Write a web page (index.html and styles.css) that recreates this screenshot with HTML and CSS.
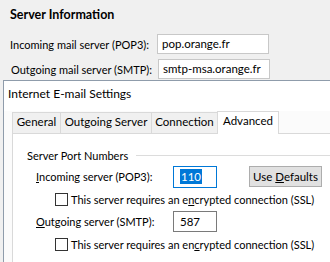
FILE: index.html
```html
<!DOCTYPE html>
<html lang="en">
<head>
    <meta charset="UTF-8">
    <title>Internet E-mail Settings</title>
    <link rel="stylesheet" href="styles.css">
</head>
<body>
    <div class="account">
        <div class="section-title">Server Information</div>
        <div class="account-row">
            <span class="account-label">Incoming mail server (POP3):</span>
            <span class="account-field">pop.orange.fr</span>
        </div>
        <div class="account-row second">
            <span class="account-label">Outgoing mail server (SMTP):</span>
            <span class="account-field">smtp-msa.orange.fr</span>
        </div>
    </div>

    <div class="dialog">
        <div class="titlebar">Internet E-mail Settings</div>
        <div class="tabs">
            <div class="tab tab-general">General</div>
            <div class="tab tab-outgoing">Outgoing Server</div>
            <div class="tab tab-connection">Connection</div>
            <div class="tab tab-advanced active">Advanced</div>
        </div>
        <div class="panel">
            <div class="group-title"><span>Server Port Numbers</span><i class="rule"></i></div>

            <div class="port-row">
                <span class="port-label"><u>I</u>ncoming server (POP3):</span>
                <span class="port-field focused"><span class="selected">110</span></span>
                <span class="btn">Use <u>D</u>efaults</span>
            </div>
            <div class="check-row">
                <span class="checkbox"></span>
                <span>This server requires an e<u>n</u>crypted connection (SSL)</span>
            </div>

            <div class="port-row">
                <span class="port-label"><u>O</u>utgoing server (SMTP):</span>
                <span class="port-field">587</span>
            </div>
            <div class="check-row">
                <span class="checkbox"></span>
                <span>This server requires an en<u>c</u>rypted connection (SSL)</span>
            </div>
        </div>
    </div>
</body>
</html>
```

FILE: styles.css
```css
* {
    margin: 0;
    padding: 0;
    box-sizing: border-box;
}

body {
    background: #f0f0f0;
    font-family: Lato, 'Liberation Sans', sans-serif;
    color: #000;
    width: 330px;
    height: 262px;
    overflow: hidden;
    white-space: nowrap;
}

/* account settings window behind the dialog */
.account {
    height: 80px;
    overflow: hidden;
    padding: 7px 0 0 10px;
    font-size: 11px;
}

.section-title {
    font-weight: bold;
    font-size: 12.5px;
    height: 27px;
}

.account-row {
    display: flex;
    align-items: center;
    height: 20px;
}

.account-row.second {
    margin-top: 5px;
    padding-left: 1px;
}

.account-label {
    width: 147px;
    flex-shrink: 0;
}

.account-field {
    width: 112px;
    height: 20px;
    padding: 1px 4px;
    background: #fff;
    border: 1px solid #c8c8c8;
    font-size: 11.5px;
    line-height: 16px;
}

/* dialog */
.dialog {
    margin-left: 3px;
    height: 182px;
    background: #fbfbfb;
    border-top: 1px solid #8f9cab;
    border-left: 1px solid #8f9cab;
    font-size: 11.5px;
}

.titlebar {
    height: 30px;
    padding: 5px 0 0 4px;
    background: #fff;
    font-size: 12px;
}

.tabs {
    display: flex;
    align-items: flex-end;
    height: 22px;
    padding-left: 8px;
}

.tab {
    height: 21px;
    padding-top: 2px;
    text-align: center;
    background: #f0f0f0;
    border: 1px solid #d9d9d9;
    border-bottom: none;
    margin-right: -1px;
}

.tab-general { width: 49px; }
.tab-outgoing { width: 92px; }
.tab-connection { width: 67px; }
.tab-advanced { width: 62px; }

.tab.active {
    height: 23px;
    padding-top: 2px;
    margin-bottom: -1px;
    background: #fff;
    position: relative;
}

.panel {
    margin-left: 8px;
    height: 130px;
    background: #fff;
    border-top: 1px solid #d9d9d9;
    border-left: 1px solid #d9d9d9;
    padding: 13px 0 0 14px;
}

.group-title {
    display: flex;
    align-items: center;
    gap: 8px;
    height: 16px;
    margin-bottom: 2px;
    font-size: 11px;
}

.rule {
    flex: 1;
    height: 1px;
    background: #dcdcdc;
}

.port-row {
    display: flex;
    align-items: center;
    height: 23px;
    padding-left: 9px;
    font-size: 11px;
}

.port-label {
    width: 137px;
    flex-shrink: 0;
}

.port-field {
    width: 44px;
    height: 21px;
    padding: 2px 6px;
    border: 1px solid #7a7a7a;
    background: #fff;
    line-height: 15px;
    font-size: 11.5px;
    flex-shrink: 0;
}

.port-field.focused {
    height: 22px;
    border-color: #0078d7;
}

.selected {
    display: inline-block;
    padding: 0 1px;
    background: #0078d7;
    color: #fff;
}

.btn {
    margin-left: 32px;
    width: 73px;
    height: 21px;
    text-align: center;
    line-height: 19px;
    font-size: 11.5px;
    background: #e1e1e1;
    border: 1px solid #adadad;
    flex-shrink: 0;
}

.check-row {
    display: flex;
    align-items: center;
    gap: 3px;
    height: 22px;
    padding-left: 28px;
    font-size: 11px;
}

.checkbox {
    width: 13px;
    height: 13px;
    border: 1px solid #333;
    background: #fff;
    flex-shrink: 0;
}
```
